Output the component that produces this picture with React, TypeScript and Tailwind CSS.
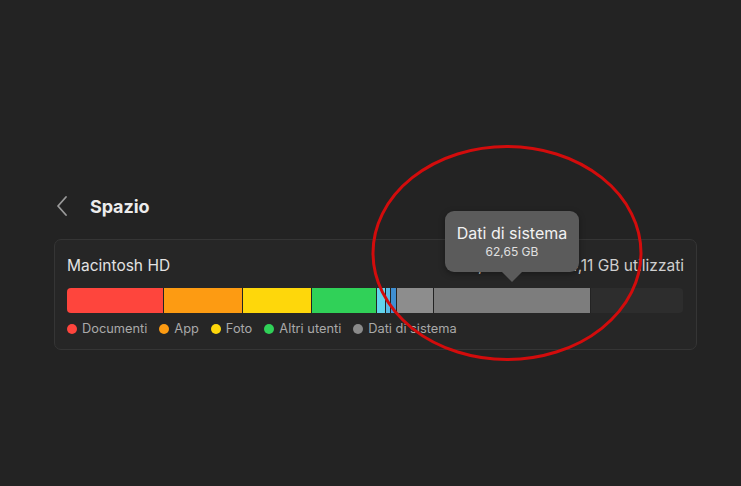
const segments = [
  { w: "w-[97px]", c: "bg-[#fe453d]" },
  { w: "w-[79px]", c: "bg-[#fd9b12]" },
  { w: "w-[69px]", c: "bg-[#fed70b]" },
  { w: "w-[65px]", c: "bg-[#30d158]" },
  { w: "w-[9px]", c: "bg-[#62d4ec]" },
  { w: "w-[5px]", c: "bg-[#57b9e6]" },
  { w: "w-[6px]", c: "bg-[#3f8fd2]" },
  { w: "w-[37px]", c: "bg-[#8d8d8d]" },
  { w: "w-[157px]", c: "bg-[#7d7d7d]" },
];

const legend = [
  { label: "Documenti", c: "bg-[#fe453d]" },
  { label: "App", c: "bg-[#fd9b12]" },
  { label: "Foto", c: "bg-[#fed70b]" },
  { label: "Altri utenti", c: "bg-[#30d158]" },
  { label: "Dati di sistema", c: "bg-[#8a8a8a]" },
];

const App = () => {
  return (
    <div className="relative w-[741px] h-[486px] overflow-hidden bg-[#232323] font-['Inter','Liberation_Sans',sans-serif]">
      <div className="pt-[194px] pl-[54px]">
        {/* header */}
        <div className="flex items-center h-[24px]">
          <svg width="14" height="22" viewBox="0 0 14 22" className="ml-[1px]">
            <path d="M11 2 L3 11 L11 20" fill="none" stroke="#9a9a9a" strokeWidth="1.8" strokeLinecap="round" strokeLinejoin="round" />
          </svg>
          <h1 className="ml-[21px] text-[18px] font-bold text-[#ececec] tracking-[-0.1px]">Spazio</h1>
        </div>

        {/* card */}
        <div className="mt-[21px] w-[643px] h-[111px] rounded-[7px] border border-[#353535] bg-[#262626] px-[12px]">
          <div className="flex justify-between items-center pt-[16px] h-[36px] text-[15.5px] leading-[20px]">
            <span className="text-[#e2e2e2]">Macintosh HD</span>
            <span className="text-[#cfcfcf]">245,72 GB di 494,11 GB utilizzati</span>
          </div>

          <div className="mt-[12px] flex h-[25px] w-[616px] rounded-[4px] overflow-hidden bg-[#2d2d2d]">
            {segments.map((s, i) => (
              <div key={i} className={`${s.w} ${s.c} h-full border-r border-[#232323]`} />
            ))}
          </div>

          <div className="mt-[8px] flex items-center gap-[12px] text-[12.8px] leading-[16px] text-[#a9a9a9]">
            {legend.map((l) => (
              <div key={l.label} className="flex items-center gap-[5px]">
                <span className={`w-[10px] h-[10px] rounded-full ${l.c}`} />
                <span>{l.label}</span>
              </div>
            ))}
          </div>
        </div>
      </div>

      {/* tooltip */}
      <div className="absolute left-[445px] top-[211px] w-[134px] h-[61px] rounded-[9px] bg-[#5b5b5b] shadow-[0_2px_6px_rgba(0,0,0,0.35)] flex flex-col items-center pt-[13px]">
        <span className="text-[16px] leading-[19px] text-[#f2f2f2]">Dati di sistema</span>
        <span className="text-[12px] leading-[15px] text-[#e0e0e0] mt-[1px]">62,65 GB</span>
      </div>
      <svg className="absolute left-[501px] top-[271px] w-[22px] h-[12px]" viewBox="0 0 22 12">
        <path d="M0 0 L22 0 L11 11 Z" fill="#5b5b5b" />
      </svg>

      {/* red annotation ring */}
      <svg className="absolute left-[370px] top-[143px] w-[274px] h-[220px] overflow-visible" viewBox="0 0 274 220">
        <ellipse cx="137" cy="110" rx="134" ry="106.5" fill="none" stroke="#d20c0c" strokeWidth="3" />
      </svg>
    </div>
  );
};

export default App;
